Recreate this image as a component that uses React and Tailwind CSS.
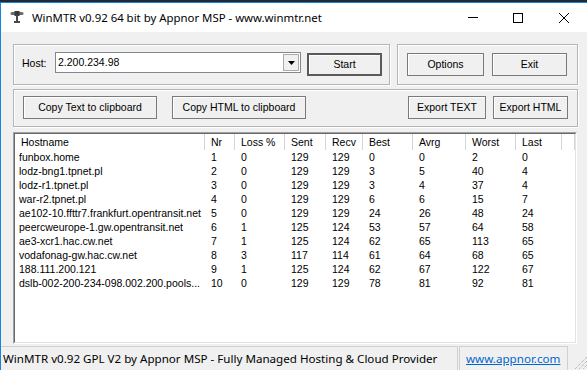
import React from "react";

const cols = [
  { name: "Hostname", w: "w-[190px]" },
  { name: "Nr", w: "w-[30px]" },
  { name: "Loss %", w: "w-[50px]" },
  { name: "Sent", w: "w-[41px]" },
  { name: "Recv", w: "w-[37px]" },
  { name: "Best", w: "w-[50px]" },
  { name: "Avrg", w: "w-[53px]" },
  { name: "Worst", w: "w-[50px]" },
  { name: "Last", w: "w-[46px]" },
];

const rows = [
  ["funbox.home", "1", "0", "129", "129", "0", "0", "2", "0"],
  ["lodz-bng1.tpnet.pl", "2", "0", "129", "129", "3", "5", "40", "4"],
  ["lodz-r1.tpnet.pl", "3", "0", "129", "129", "3", "4", "37", "4"],
  ["war-r2.tpnet.pl", "4", "0", "129", "129", "6", "6", "15", "7"],
  ["ae102-10.ffttr7.frankfurt.opentransit.net", "5", "0", "129", "129", "24", "26", "48", "24"],
  ["peercweurope-1.gw.opentransit.net", "6", "1", "125", "124", "53", "57", "64", "58"],
  ["ae3-xcr1.hac.cw.net", "7", "1", "125", "124", "62", "65", "113", "65"],
  ["vodafonag-gw.hac.cw.net", "8", "3", "117", "114", "61", "64", "68", "65"],
  ["188.111.200.121", "9", "1", "125", "124", "62", "67", "122", "67"],
  ["dslb-002-200-234-098.002.200.pools...", "10", "0", "129", "129", "78", "81", "92", "81"],
];

const classic = "font-['Liberation_Sans',Arial,sans-serif] text-[10.5px] text-black";
const segoe = "font-['Noto_Sans','Open_Sans',sans-serif] text-[11.4px]";
const segoeStatus = "font-['Noto_Sans','Open_Sans',sans-serif] text-[11.6px]";

function Btn({ w, children, def }) {
  return (
    <div
      className={`${w} h-[23px] flex items-center justify-center bg-[#f0f0f0] ${classic} leading-none ${
        def
          ? "border-2 border-[#5a5a5a] shadow-[inset_1px_1px_0_#fff]"
          : "border border-[#7a7a7a] shadow-[inset_1px_1px_0_#fff]"
      }`}
    >
      {children}
    </div>
  );
}

const group = "border border-[#b4b4b4] shadow-[inset_1px_1px_0_#fff,1px_1px_0_#fff]";

export default function App() {
  return (
    <div className="w-[587px] h-[370px] overflow-hidden bg-[#1c2a3c] pt-[2px]">
      <div className="w-[600px] h-[368px] border-l border-t border-[#1883d7] flex flex-col">
        {/* Title bar */}
        <div className="h-[29px] bg-white flex items-center shrink-0">
          <svg width="14" height="14" viewBox="0 0 14 14" className="ml-[9px] mb-[2px]">
            <rect x="0.5" y="2" width="13" height="3" rx="1.5" fill="#6b6b6b" />
            <rect x="4.5" y="1" width="5" height="5" fill="#3a3a3a" />
            <rect x="6" y="5" width="2" height="7" fill="#4a4a4a" />
            <rect x="4" y="11" width="6" height="2" fill="#4a4a4a" />
          </svg>
          <div className={`ml-[8px] ${segoe} text-black whitespace-nowrap`}>
            WinMTR v0.92 64 bit by Appnor MSP - www.winmtr.net
          </div>
          <div className="ml-auto flex h-full w-[138px] mr-[13px] shrink-0">
            <div className="w-[46px] h-full flex items-center justify-center">
              <div className="w-[10px] h-px bg-black ml-[1px]" />
            </div>
            <div className="w-[46px] h-full flex items-center justify-center">
              <div className="w-[10px] h-[10px] border border-black" />
            </div>
            <div className="w-[46px] h-full flex items-center justify-center">
              <svg width="10" height="10" viewBox="0 0 10 10">
                <path d="M0 0 L10 10 M10 0 L0 10" stroke="#000" strokeWidth="1" />
              </svg>
            </div>
          </div>
        </div>

        {/* Body */}
        <div className="flex-1 bg-[#f0f0f0] flex flex-col pl-[12px] pt-[12px]">
          {/* Row 1 */}
          <div className="flex gap-[7px]">
            <div className={`w-[377px] h-[41px] ${group} flex items-start`}>
              <div className={`w-[33px] ml-[8px] mt-[12px] ${classic} leading-[13px]`}>Host:</div>
              <div className="w-[246px] h-[21px] mt-[7px] bg-white border border-[#828790] flex items-center relative">
                <span className={`pl-[2px] ${classic}`}>2.200.234.98</span>
                <div className="ml-auto mr-[1px] w-[16px] h-[17px] bg-[#f0f0f0] border border-[#acacac] flex items-center justify-center">
                  <svg width="7" height="4" viewBox="0 0 7 4">
                    <path d="M0 0 H7 L3.5 4 Z" fill="#000" />
                  </svg>
                </div>
              </div>
              <div className="ml-[6px] mt-[8px]">
                <Btn w="w-[75px]" def>Start</Btn>
              </div>
            </div>
            <div className={`w-[181px] h-[41px] ${group} flex items-start pl-[9px] pt-[8px] gap-[8px]`}>
              <Btn w="w-[77px]">Options</Btn>
              <Btn w="w-[75px]">Exit</Btn>
            </div>
          </div>

          {/* Row 2 */}
          <div className={`mt-[4px] w-[565px] h-[38px] ${group} flex items-start pl-[9px] pt-[6px] pr-[9px]`}>
            <Btn w="w-[134px]">Copy Text to clipboard</Btn>
            <div className="ml-[15px]">
              <Btn w="w-[134px]">Copy HTML to clipboard</Btn>
            </div>
            <div className="ml-auto flex gap-[7px]">
              <Btn w="w-[78px]">Export TEXT</Btn>
              <Btn w="w-[75px]">Export HTML</Btn>
            </div>
          </div>

          {/* List view */}
          <div className="mt-[5px] w-[564px] h-[212px] border border-t-[#a0a0a0] border-l-[#a0a0a0] border-r-white border-b-white">
            <div className="w-full h-full border border-t-[#696969] border-l-[#696969] border-r-[#e3e3e3] border-b-[#e3e3e3] bg-white flex flex-col">
              <div className="h-[16px] flex shrink-0">
                {cols.map((c) => (
                  <div
                    key={c.name}
                    className={`${c.w} h-full border-r border-[#d5d5d5] pl-[6px] flex items-center ${classic} leading-none whitespace-nowrap`}
                  >
                    {c.name}
                  </div>
                ))}
                <div className="w-[13px] h-full border-r border-[#d5d5d5]" />
              </div>
              {rows.map((r, i) => (
                <div key={i} className="h-[14px] flex">
                  {r.map((v, j) => (
                    <div
                      key={j}
                      className={`${cols[j].w} ${j === 0 ? "pl-[4px]" : "pl-[6px]"} ${classic} leading-[14px] whitespace-nowrap overflow-hidden`}
                    >
                      {v}
                    </div>
                  ))}
                </div>
              ))}
            </div>
          </div>

          {/* Status bar */}
          <div className="mt-[2px] -ml-[12px] h-[24px] flex">
            <div className={`w-[457px] h-full border-t border-r border-[#d0d0d0] pl-[2px] flex items-center ${segoeStatus} text-black whitespace-nowrap overflow-hidden`}>
              WinMTR v0.92 GPL V2 by Appnor MSP - Fully Managed Hosting &amp; Cloud Provider
            </div>
            <div className={`ml-[1px] w-[109px] h-full border-t border-l border-r border-[#d0d0d0] pl-[6px] flex items-center ${segoeStatus}`}>
              <span className="text-[#0066cc] underline">www.appnor.com</span>
            </div>
            <div className="w-[19px] h-full flex items-end justify-end">
              <svg width="14" height="14" viewBox="0 0 14 14" className="mr-[-1px]">
                <path d="M13 1 L1 13 M13 5 L5 13 M13 9 L9 13" stroke="#a0a0a0" strokeWidth="1" strokeDasharray="1 1" />
              </svg>
            </div>
          </div>
        </div>
      </div>
    </div>
  );
}
